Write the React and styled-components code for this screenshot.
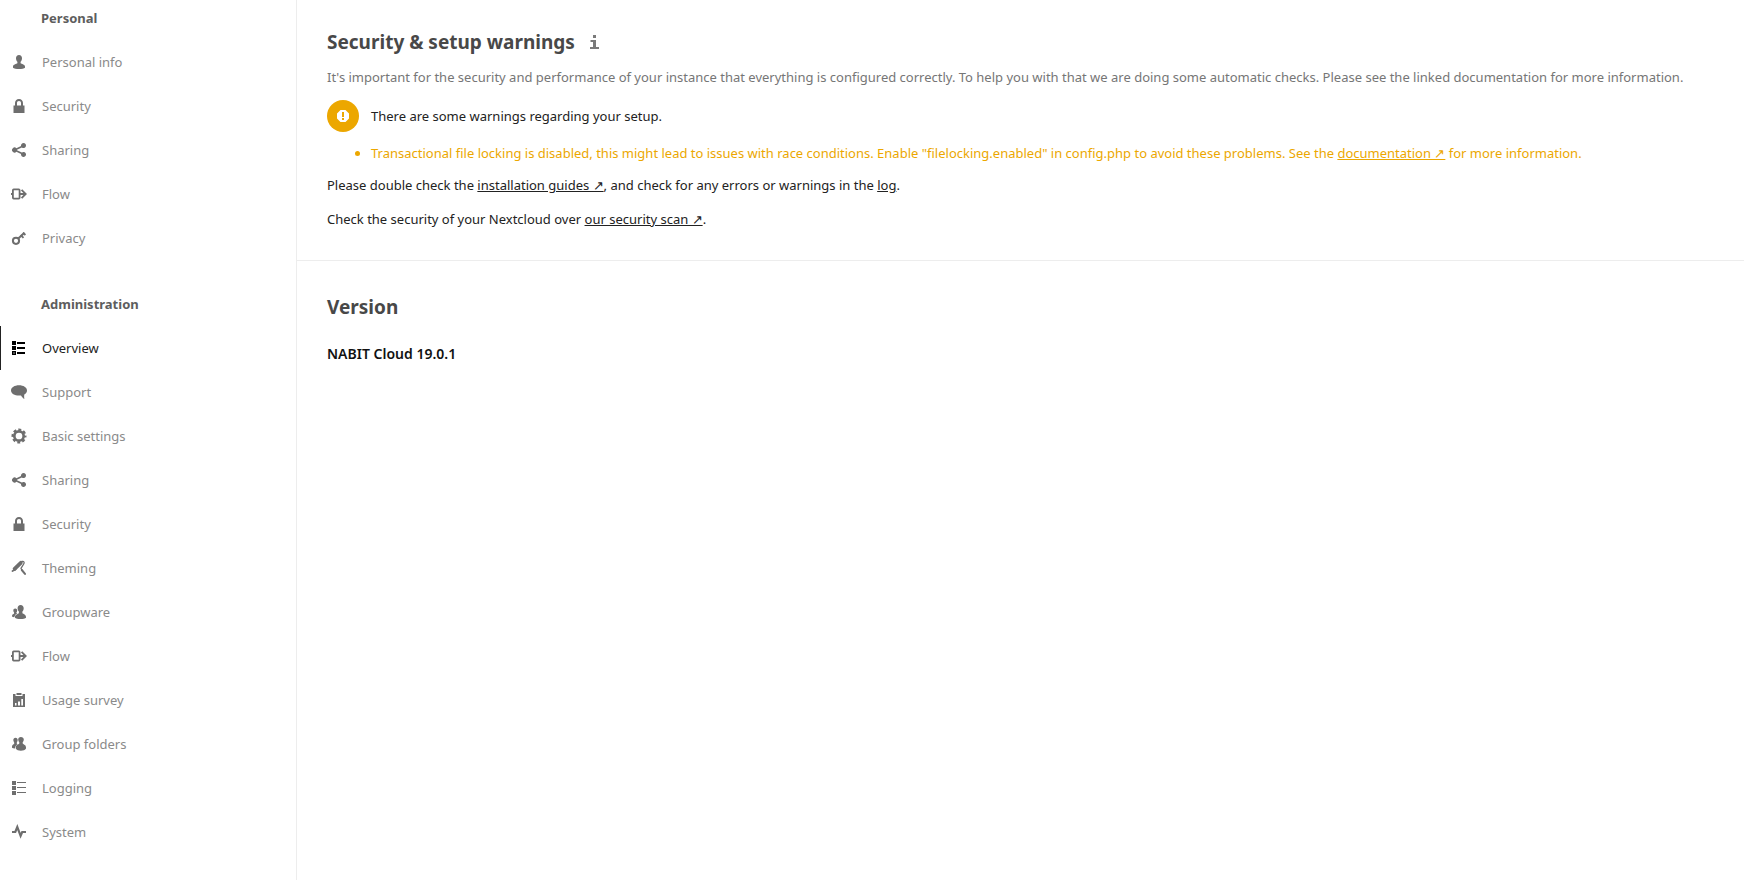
import React from 'react';
import styled, { createGlobalStyle } from 'styled-components';

const GlobalStyle = createGlobalStyle`
  *, *::before, *::after { box-sizing: border-box; }
  body {
    margin: 0;
    background: #fff;
    color: #222;
    font-family: "Segoe UI", "Noto Sans", "Open Sans", sans-serif;
    font-size: 13px;
    line-height: 22px;
  }
`;

const Page = styled.div`
  display: flex;
  min-height: 100vh;
`;

const Sidebar = styled.nav`
  flex: 0 0 297px;
  border-right: 1px solid #ededed;
`;

const NavGroup = styled.section`
  & + & { margin-top: 26px; }
`;

const NavHeading = styled.h2`
  display: flex;
  align-items: center;
  height: 40px;
  margin: 0;
  padding: 0 0 4px 41px;
  font-size: 13px;
  font-weight: 700;
  color: #5d5d5d;
`;

const NavList = styled.ul`
  margin: 0;
  padding: 0;
  list-style: none;
`;

const NavLink = styled.a`
  display: flex;
  align-items: center;
  gap: 15px;
  height: 44px;
  padding-left: 10px;
  border-left: 1px solid ${({ $active }) => ($active ? '#222' : 'transparent')};
  color: ${({ $active }) => ($active ? '#222' : '#8a8a8a')};
  text-decoration: none;

  svg { color: ${({ $active }) => ($active ? '#000' : '#6e6e6e')}; }
`;

const Icon = styled.svg`
  flex: none;
  width: 16px;
  height: 16px;
  fill: currentColor;
`;

const Content = styled.main`
  flex: 1;
  min-width: 0;
`;

const Section = styled.section`
  padding: 30px;

  &:first-child { padding-top: 26px; }
  & + & { border-top: 1px solid #ededed; }
`;

const TitleRow = styled.div`
  display: flex;
  align-items: center;
  gap: 12px;
  height: 32px;
  margin-bottom: 8px;
`;

const Title = styled.h2`
  margin: 0;
  font-size: 19px;
  line-height: 24px;
  font-weight: 700;
  color: #484848;
`;

const InfoLink = styled.a`
  display: flex;
  color: #7a7a7a;
`;

const Hint = styled.p`
  margin: 0 0 12px;
  color: #767676;
`;

const Status = styled.div`
  display: flex;
  align-items: center;
  gap: 12px;
`;

const StatusBadge = styled.span`
  display: flex;
  align-items: center;
  justify-content: center;
  width: 32px;
  height: 32px;
  border-radius: 50%;
  background: #eca700;
  color: #fff;
`;

const WarningList = styled.ul`
  margin: 10px 0;
  padding-left: 44px;
  color: #eca700;
`;

const Paragraph = styled.p`
  margin: 0 0 12px;

  &:last-child { margin-bottom: 0; }
`;

const TextLink = styled.a`
  color: inherit;
  text-decoration: underline;
`;

const Product = styled.p`
  margin: 0;
  padding-top: 12px;
  font-size: 14px;
  font-weight: 600;
  color: #111;
`;

const lock = (
  <path d="M8 1C5.500 1 4 2.800 4 5v2.500H2.500V15h11V7.500H12V5c0-2.200-1.500-4-4-4zm0 2c1.400 0 2 .9 2 2v2.500H6V5c0-1.100.6-2 2-2z" />
);
const share = (
  <path d="M12.500 1a2.500 2.500 0 0 0-2.450 3L5.400 6.300a2.500 2.500 0 1 0 0 3.400l4.650 2.300a2.500 2.500 0 1 0 .8-1.400L6 8.200v-.4l4.850-2.400A2.500 2.500 0 1 0 12.500 1z" />
);
const flow = (
  <g fill="none" stroke="currentColor" strokeWidth="1.800">
    <rect x="1.900" y="3.400" width="6.700" height="9.200" rx="0.800" />
    <path d="M0 8h2M8.600 8h6M10.600 3.900L14.700 8l-4.100 4.100" />
  </g>
);

const icons = {
  user: (
    <path d="M8 1C6.100 1 5 2.300 5 4.200c0 1.500.6 2.800 1.400 3.600v1.500C5.400 10.300 2 10.200 2 12.600v1.200C3.400 15.400 12.600 15.400 14 13.800v-1.200c0-2.400-3.400-2.300-4.400-3.300V7.800C10.400 7 11 5.700 11 4.200 11 2.300 9.900 1 8 1z" />
  ),
  lock,
  share,
  flow,
  key: (
    <g fill="none" stroke="currentColor">
      <circle cx="5" cy="10.800" r="3.100" strokeWidth="2" />
      <path d="M7 8.800l6.500-6" strokeWidth="2" />
      <path d="M9.700 5l2.800 2.800M12 2.600l2.400 2.400" strokeWidth="1.800" />
    </g>
  ),
  overview: (
    <>
      <path d="M1 1h4v4H1zM1 6h4v4H1zM6 2h8v2H6zM6 7h8v2H6zM6 12h8v2H6z" />
      <path d="M1.700 11.700h2.600v2.600H1.700z" fill="none" stroke="currentColor" strokeWidth="1.400" />
    </>
  ),
  comment: (
    <path d="M8 1.200C3.600 1.200 0 3.300 0 6.400s3.600 5.200 8 5.200c.7 0 1.400 0 2-.1.700 1.300 2.200 2.900 3.400 3.500-.3-1.300-.3-3.200-.1-4.600C15 9.500 16 8.100 16 6.400c0-3.100-3.600-5.200-8-5.200z" />
  ),
  gear: (
    <g fill="none" stroke="currentColor">
      <circle cx="8" cy="8" r="4.700" strokeWidth="2.700" />
      <circle cx="8" cy="8" r="6.400" strokeWidth="2.200" strokeDasharray="2.900 2.127" strokeDashoffset="1.450" />
    </g>
  ),
  brush: (
    <g fill="none" stroke="currentColor" strokeLinecap="round">
      <path d="M3.600 8.800L9.800 2.800" strokeWidth="3.800" />
      <path d="M1.500 11l3-1.500" strokeWidth="1.800" />
      <path d="M11 1.500c2-.4 2.700.9 1.700 2.500L10 8.300l.8 1.500" strokeWidth="1.300" />
      <path d="M10.800 10l3.200 3.900" strokeWidth="2" />
    </g>
  ),
  groupware: (
    <>
      <path d="M9.600 1C7.700 1 6.600 2.300 6.600 4.200c0 1.500.6 2.600 1.300 3.400v1.600C6.900 10 4 10.600 4 12.800v1c1.200 1.600 9.800 1.600 11 0v-1c0-2.200-2.500-2.800-3.600-3.600V7.600c.7-.8 1.300-1.900 1.300-3.400C12.700 2.300 11.500 1 9.600 1z" />
      <path d="M4.200 4.500C3 4.500 2.300 5.300 2.300 6.500c0 .9.400 1.600.8 2.100v1C2.500 10.200 1 10.500 1 12v.6c.4.400 1.300.6 2.400.7.100-2 1.600-3 2.900-3.700l-.9-.5v-.5c.4-.5.8-1.200.8-2.100 0-1.200-.8-2-2-2z" />
    </>
  ),
  survey: (
    <path
      fillRule="evenodd"
      d="M2 2h2.500v2h7V2H14v13H2zM5.500 1h5v2h-5zM4 11v2.500h1.500V11zM7 9.500v4h2v-4zM10.300 7v6.500h1.700V7z"
    />
  ),
  folders: (
    <>
      <path d="M9.900 1C8.200 1 7.200 2 7.200 3.600c0 1.200.5 2.100 1.100 2.700v1.300C7.300 8.700 4.800 9 4.800 11.400v1.100c1.400 2.900 8.800 2.900 10.200 0v-1.100c0-2.400-2.300-2.700-3.300-3.800V6.300c.6-.6 1.100-1.500 1.100-2.700C12.800 2 11.600 1 9.900 1z" />
      <path d="M4.500 1.800C3.100 1.800 2.300 2.800 2.300 4.100c0 1 .4 1.800.9 2.300v1.400C2.600 8.500 1 8.900 1 10.500v1.200c.6.500 1.600.8 3 .8.100-2.400 1.300-3.500 2.800-4.200L5.800 7.700V6.400c.5-.5.900-1.300.9-2.300 0-1.300-.8-2.300-2.200-2.300z" />
    </>
  ),
  list: <path d="M1 1h4v4H1zM1 6h4v4H1zM1 11h4v4H1zM6 2h9v1H6zM6 7h9v1H6zM6 12h9v1H6z" />,
  pulse: (
    <path
      d="M1 8h3.300l2-5 3.300 8.800L11.200 8H15"
      fill="none"
      stroke="currentColor"
      strokeWidth="2.200"
    />
  ),
};

const groups = [
  {
    title: 'Personal',
    items: [
      ['user', 'Personal info'],
      ['lock', 'Security'],
      ['share', 'Sharing'],
      ['flow', 'Flow'],
      ['key', 'Privacy'],
    ],
  },
  {
    title: 'Administration',
    items: [
      ['overview', 'Overview'],
      ['comment', 'Support'],
      ['gear', 'Basic settings'],
      ['share', 'Sharing'],
      ['lock', 'Security'],
      ['brush', 'Theming'],
      ['groupware', 'Groupware'],
      ['flow', 'Flow'],
      ['survey', 'Usage survey'],
      ['folders', 'Group folders'],
      ['list', 'Logging'],
      ['pulse', 'System'],
    ],
  },
];

export default function App() {
  return (
    <>
      <GlobalStyle />
      <Page>
        <Sidebar aria-label="Settings">
          {groups.map((group) => (
            <NavGroup key={group.title}>
              <NavHeading>{group.title}</NavHeading>
              <NavList>
                {group.items.map(([icon, label]) => (
                  <li key={label}>
                    <NavLink
                      href="#"
                      $active={label === 'Overview'}
                      aria-current={label === 'Overview' ? 'page' : undefined}
                    >
                      <Icon viewBox="0 0 16 16" aria-hidden="true">{icons[icon]}</Icon>
                      {label}
                    </NavLink>
                  </li>
                ))}
              </NavList>
            </NavGroup>
          ))}
        </Sidebar>
        <Content>
          <Section>
            <TitleRow>
              <Title>Security &amp; setup warnings</Title>
              <InfoLink href="#" aria-label="Open documentation">
                <Icon viewBox="0 0 16 16" aria-hidden="true">
                  <path d="M6 1h3v3H6zM3.500 6H9v7h3v2H3v-2h3V8H3.500z" />
                </Icon>
              </InfoLink>
            </TitleRow>
            <Hint>
              It's important for the security and performance of your instance that everything is
              configured correctly. To help you with that we are doing some automatic checks. Please
              see the linked documentation for more information.
            </Hint>
            <Status>
              <StatusBadge>
                <Icon viewBox="0 0 16 16" aria-hidden="true">
                  <path
                    fillRule="evenodd"
                    d="M5.500 2h5L14 5.500v5L10.500 14h-5L2 10.500v-5zM7 4v5h2V4zM7 10v2h2v-2z"
                  />
                </Icon>
              </StatusBadge>
              There are some warnings regarding your setup.
            </Status>
            <WarningList>
              <li>
                Transactional file locking is disabled, this might lead to issues with race
                conditions. Enable "filelocking.enabled" in config.php to avoid these problems. See
                the <TextLink href="#">documentation ↗</TextLink> for more information.
              </li>
            </WarningList>
            <Paragraph>
              Please double check the <TextLink href="#">installation guides ↗</TextLink>, and check
              for any errors or warnings in the <TextLink href="#">log</TextLink>.
            </Paragraph>
            <Paragraph>
              Check the security of your Nextcloud over{' '}
              <TextLink href="#">our security scan ↗</TextLink>.
            </Paragraph>
          </Section>
          <Section>
            <TitleRow>
              <Title>Version</Title>
            </TitleRow>
            <Product>NABIT Cloud 19.0.1</Product>
          </Section>
        </Content>
      </Page>
    </>
  );
}
